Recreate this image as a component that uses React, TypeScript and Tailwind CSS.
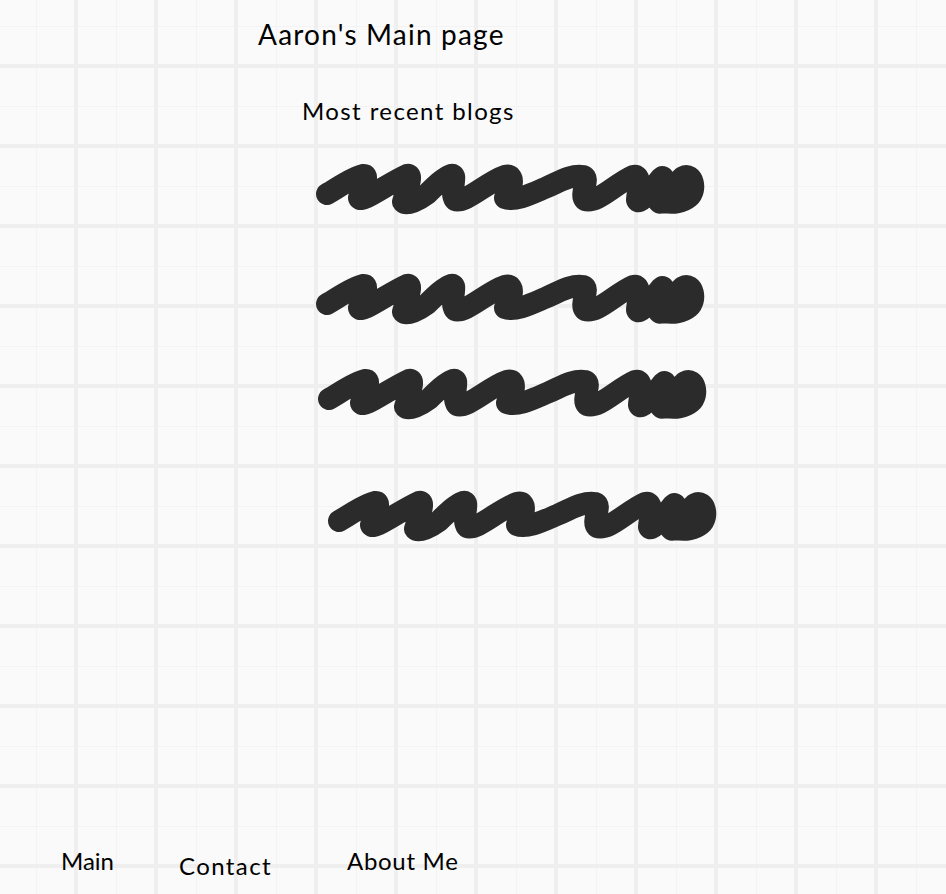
import React from "react";

const SCRIBBLE_D =
  "M12 34 C 24 27, 38 17, 48 15 C 56 14, 46 30, 44 38 C 46 44, 72 24, 92 15 C 100 13, 90 34, 88 42 C 92 46, 104 40, 112 34 C 120 26, 128 18, 136 15 C 144 13, 134 32, 140 40 C 150 44, 172 22, 190 16 C 202 13, 196 32, 190 38 C 200 42, 216 34, 230 28 C 244 22, 256 14, 268 16 C 276 18, 264 34, 270 40 C 282 44, 300 24, 318 16 C 328 13, 322 34, 322 40 C 324 46, 336 30, 346 18 C 352 12, 342 36, 344 42 C 348 46, 358 26, 368 17 C 378 12, 382 30, 374 37 C 368 42, 358 44, 350 42";

function Scribble({ className }: { className: string }) {
  return (
    <svg
      className={className}
      width="400"
      height="60"
      viewBox="0 0 400 60"
      fill="none"
    >
      <path
        d={SCRIBBLE_D}
        stroke="#2b2b2b"
        strokeWidth="22"
        strokeLinecap="round"
        strokeLinejoin="round"
      />
    </svg>
  );
}

export default function App() {
  return (
    <div
      className="relative flex h-[894px] w-[946px] flex-col overflow-hidden bg-[#fafafa] bg-[linear-gradient(to_right,#efefef_0_4px,transparent_4px),linear-gradient(to_bottom,#efefef_0_4px,transparent_4px),linear-gradient(to_right,transparent_42px,#f3f3f3_42px_43px,transparent_43px),linear-gradient(to_bottom,transparent_42px,#f3f3f3_42px_43px,transparent_43px)] bg-[size:80px_80px] bg-[position:74px_64px] text-black"
      style={{ fontFamily: "Lato, 'Noto Sans', sans-serif" }}
    >
      <h1 className="mt-[20px] pl-[258px] text-[28px] leading-[28px] font-normal tracking-[1.2px]">
        Aaron's Main page
      </h1>
      <h2 className="mt-[51px] pl-[302px] text-[24px] leading-[24px] font-normal tracking-[1.4px]">
        Most recent blogs
      </h2>
      <div className="flex flex-col">
        <Scribble className="ml-[315px] mt-[37px] block" />
        <Scribble className="ml-[315px] mt-[50px] block" />
        <Scribble className="ml-[317px] mt-[35px] block" />
        <Scribble className="ml-[327px] mt-[62px] block" />
      </div>
      <nav className="mt-auto flex items-start pb-[16px] pl-[61px] text-[24px] leading-[24px]">
        <span className="w-[118px]">Main</span>
        <span className="mt-[5px] w-[168px] tracking-[1.4px]">Contact</span>
        <span className="tracking-[0.7px]">About Me</span>
      </nav>
    </div>
  );
}
